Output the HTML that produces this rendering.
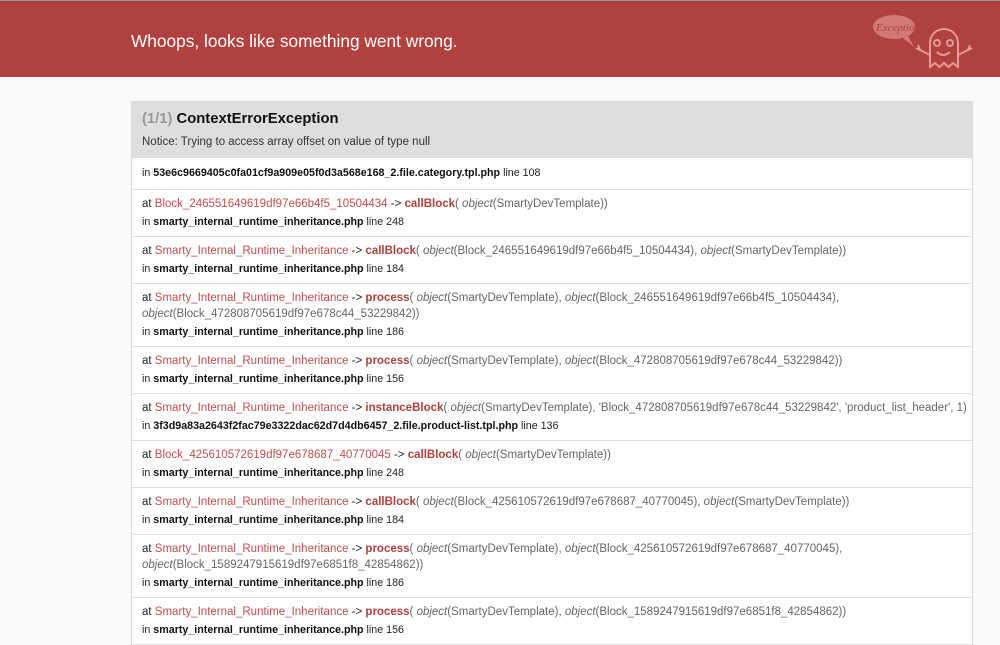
<!DOCTYPE html>
<html><head><meta charset="utf-8"><style>
body{margin:0;background:#f9f9f9;font-family:"Liberation Sans",Arial,sans-serif;font-size:10.7px;color:#222;width:1000px;height:643px;overflow:hidden}
.top{border-top:1px solid #999;background:#b0413e;height:76px;position:relative}
.top h1{margin:0;position:absolute;left:131px;top:29px;font-size:17.3px;font-weight:normal;color:#fff;line-height:22px}
.box{position:absolute;left:131px;top:101px;width:840px;border:1px solid #ddd;border-bottom:none;background:#fff}
.hd{background:#dedede;height:55px;padding:0 10px;border-bottom:1px solid #ddd}
.hd .t{padding-top:8px;font-size:14.8px;font-weight:bold;line-height:18px;color:#111}
.hd .t span{color:#999}
.hd .m{margin-top:8px;font-size:11.5px;color:#333}
.r{padding:6px 10px;border-bottom:1px solid #e0e0e0;line-height:16px}
.r.f{padding:7px 10px 8px}
.r .tr{font-size:11.5px}
.r .l{margin-top:2px}
.c{color:#c0504d}
.fn{color:#b0413e;font-weight:bold}
.a{color:#666}
.a i{font-style:italic}
b{color:#111}
</style></head><body>
<div class="top"><h1>Whoops, looks like something went wrong.</h1>
<svg style="position:absolute;left:870px;top:8px" width="110" height="64" viewBox="0 0 110 64" fill="none" stroke="#e49b98" stroke-width="2">
<ellipse cx="24" cy="18" rx="21" ry="12" fill="#d27a77" stroke="none"/>
<path d="M32 28 L44 38 L38 27" fill="#d27a77" stroke="none"/>
<text x="6" y="22" font-family="Liberation Serif,serif" font-style="italic" font-size="11" fill="#b0413e" stroke="none">Exception!</text>
<path d="M60 58 V34 a14 14 0 0 1 28 0 V58 l-5 -4 l-4.5 4 l-4.5 -4 l-4.5 4 l-4.5 -4 z"/>
<circle cx="67" cy="34" r="3"/><circle cx="80" cy="34" r="3"/>
<path d="M67 43 q6 6 13 0"/>
<path d="M60 46 l-10 -5 l-2 -5 M50 41 l-4 -2"/>
<path d="M88 46 l10 -5 l2 -5 M98 41 l4 -2"/>
</svg></div>
<div class="box">
<div class="hd"><div class="t"><span>(1/1)</span> ContextErrorException</div><div class="m">Notice: Trying to access array offset on value of type null</div></div>
<div class="r f">in <b>53e6c9669405c0fa01cf9a909e05f0d3a568e168_2.file.category.tpl.php</b> line 108</div>
<div class="r"><div class="tr">at <span class="c">Block_246551649619df97e66b4f5_10504434</span> -&gt; <span class="fn">callBlock</span><span class="a">( <i>object</i>(SmartyDevTemplate))</span></div><div class="l">in <b>smarty_internal_runtime_inheritance.php</b> line 248</div></div>
<div class="r"><div class="tr">at <span class="c">Smarty_Internal_Runtime_Inheritance</span> -&gt; <span class="fn">callBlock</span><span class="a">( <i>object</i>(Block_246551649619df97e66b4f5_10504434), <i>object</i>(SmartyDevTemplate))</span></div><div class="l">in <b>smarty_internal_runtime_inheritance.php</b> line 184</div></div>
<div class="r"><div class="tr">at <span class="c">Smarty_Internal_Runtime_Inheritance</span> -&gt; <span class="fn">process</span><span class="a">( <i>object</i>(SmartyDevTemplate), <i>object</i>(Block_246551649619df97e66b4f5_10504434),<br><i>object</i>(Block_472808705619df97e678c44_53229842))</span></div><div class="l">in <b>smarty_internal_runtime_inheritance.php</b> line 186</div></div>
<div class="r"><div class="tr">at <span class="c">Smarty_Internal_Runtime_Inheritance</span> -&gt; <span class="fn">process</span><span class="a">( <i>object</i>(SmartyDevTemplate), <i>object</i>(Block_472808705619df97e678c44_53229842))</span></div><div class="l">in <b>smarty_internal_runtime_inheritance.php</b> line 156</div></div>
<div class="r"><div class="tr" style="white-space:nowrap">at <span class="c">Smarty_Internal_Runtime_Inheritance</span> -&gt; <span class="fn">instanceBlock</span><span class="a">( <i>object</i>(SmartyDevTemplate), 'Block_472808705619df97e678c44_53229842', 'product_list_header', 1)</span></div><div class="l">in <b>3f3d9a83a2643f2fac79e3322dac62d7d4db6457_2.file.product-list.tpl.php</b> line 136</div></div>
<div class="r"><div class="tr">at <span class="c">Block_425610572619df97e678687_40770045</span> -&gt; <span class="fn">callBlock</span><span class="a">( <i>object</i>(SmartyDevTemplate))</span></div><div class="l">in <b>smarty_internal_runtime_inheritance.php</b> line 248</div></div>
<div class="r"><div class="tr">at <span class="c">Smarty_Internal_Runtime_Inheritance</span> -&gt; <span class="fn">callBlock</span><span class="a">( <i>object</i>(Block_425610572619df97e678687_40770045), <i>object</i>(SmartyDevTemplate))</span></div><div class="l">in <b>smarty_internal_runtime_inheritance.php</b> line 184</div></div>
<div class="r"><div class="tr">at <span class="c">Smarty_Internal_Runtime_Inheritance</span> -&gt; <span class="fn">process</span><span class="a">( <i>object</i>(SmartyDevTemplate), <i>object</i>(Block_425610572619df97e678687_40770045),<br><i>object</i>(Block_1589247915619df97e6851f8_42854862))</span></div><div class="l">in <b>smarty_internal_runtime_inheritance.php</b> line 186</div></div>
<div class="r"><div class="tr">at <span class="c">Smarty_Internal_Runtime_Inheritance</span> -&gt; <span class="fn">process</span><span class="a">( <i>object</i>(SmartyDevTemplate), <i>object</i>(Block_1589247915619df97e6851f8_42854862))</span></div><div class="l">in <b>smarty_internal_runtime_inheritance.php</b> line 156</div></div>
</div>
</body></html>
